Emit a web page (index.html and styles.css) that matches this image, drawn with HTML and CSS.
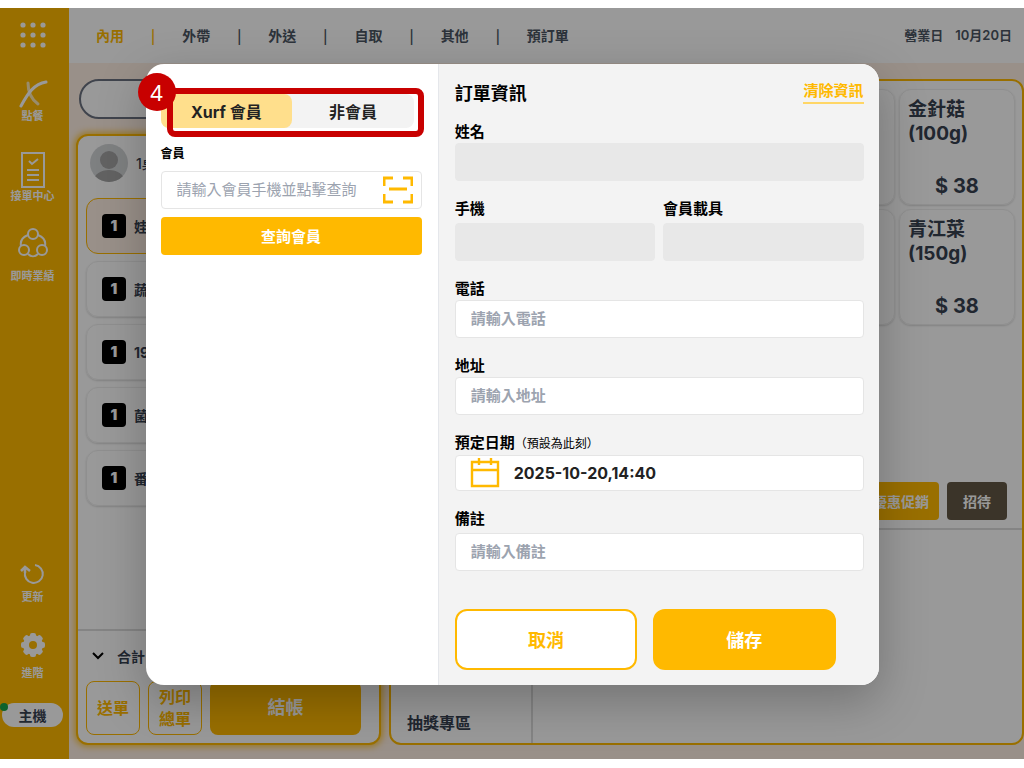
FILE: index.html
```html
<!DOCTYPE html>
<html lang="zh-Hant">
<head>
    <meta charset="UTF-8">
    <meta name="viewport" content="width=device-width, initial-scale=1.0">
    <title>訂單資訊</title>
    <link rel="stylesheet" href="styles.css">
</head>
<body>
    <div class="app">
        <nav class="sidebar">
            <a href="#" class="side-item side-menu" aria-label="menu">
                <svg width="26" height="26" viewBox="0 0 26 26" fill="currentColor">
                    <circle cx="3" cy="3" r="2.6"/><circle cx="13" cy="3" r="2.6"/><circle cx="23" cy="3" r="2.6"/>
                    <circle cx="3" cy="13" r="2.6"/><circle cx="13" cy="13" r="2.6"/><circle cx="23" cy="13" r="2.6"/>
                    <circle cx="3" cy="23" r="2.6"/><circle cx="13" cy="23" r="2.6"/><circle cx="23" cy="23" r="2.6"/>
                </svg>
            </a>
            <a href="#" class="side-item side-order">
                <svg width="30" height="28" viewBox="0 0 30 28" fill="none" stroke="currentColor" stroke-linecap="round">
                    <path d="M10 3C10 12 13 19 20 24" stroke-width="3" opacity=".7"/>
                    <path d="M3 26C10 13 16 4 28 2" stroke-width="3"/>
                </svg>
                <span>點餐</span>
            </a>
            <a href="#" class="side-item side-center">
                <svg width="24" height="36" viewBox="0 0 24 36" fill="none" stroke="currentColor" stroke-width="2">
                    <rect x="1" y="1" width="22" height="34"/>
                    <path d="M8 9l3 3 6-5M6 18h12M6 23h12M6 28h12"/>
                </svg>
                <span>接單中心</span>
            </a>
            <a href="#" class="side-item side-sales">
                <svg width="30" height="30" viewBox="0 0 30 30" fill="none" stroke="currentColor" stroke-width="2">
                    <circle cx="15" cy="6" r="5"/>
                    <circle cx="6" cy="22" r="5"/>
                    <circle cx="24" cy="22" r="5"/>
                    <path d="M10 7C5 9 2 13 3 18M20 7c5 2 8 6 7 11M10 26c3 3 7 3 10 0"/>
                </svg>
                <span>即時業績</span>
            </a>
            <div class="side-bottom">
                <a href="#" class="side-item side-refresh">
                    <svg width="28" height="22" viewBox="0 0 28 22" fill="none" stroke="currentColor" stroke-width="2">
                        <path d="M16 2a9 9 0 1 1-10 7"/>
                        <path d="M2 8l4-4 5 4M6 4v6" stroke-width="2.5"/>
                    </svg>
                    <span>更新</span>
                </a>
                <a href="#" class="side-item side-settings">
                    <svg width="24" height="24" viewBox="0 0 24 24">
                        <g fill="currentColor">
                            <rect x="9" y="0" width="6" height="24" rx="2"/>
                            <rect x="9" y="0" width="6" height="24" rx="2" transform="rotate(45 12 12)"/>
                            <rect x="9" y="0" width="6" height="24" rx="2" transform="rotate(90 12 12)"/>
                            <rect x="9" y="0" width="6" height="24" rx="2" transform="rotate(135 12 12)"/>
                            <circle cx="12" cy="12" r="10"/>
                        </g>
                        <circle cx="12" cy="12" r="4" fill="#ffb900"/>
                    </svg>
                    <span>進階</span>
                </a>
                <button type="button" class="host">主機</button>
            </div>
        </nav>

        <div class="main">
            <header class="topbar">
                <div class="order-types">
                    <a href="#" class="active">內用</a><span class="active">|</span>
                    <a href="#">外帶</a><span>|</span>
                    <a href="#">外送</a><span>|</span>
                    <a href="#">自取</a><span>|</span>
                    <a href="#">其他</a><span>|</span>
                    <a href="#">預訂單</a>
                </div>
                <div class="business-day"><span>營業日</span><span>10月20日</span></div>
            </header>

            <div class="content">
                <div class="order-column">
                    <input type="search" class="search" aria-label="search">
                    <section class="order-panel">
                        <div class="order-head">
                            <svg width="38" height="38" viewBox="0 0 38 38">
                                <defs><clipPath id="avatarClip"><circle cx="19" cy="19" r="19"/></clipPath></defs>
                                <circle cx="19" cy="19" r="19" fill="#d3d5d8"/>
                                <g clip-path="url(#avatarClip)" fill="#a3a3a3">
                                    <circle cx="19" cy="16" r="9"/>
                                    <ellipse cx="19" cy="36" rx="15" ry="10"/>
                                </g>
                            </svg>
                            <span>1桌</span>
                        </div>
                        <ul class="order-list">
                            <li class="selected"><b>1</b><span>娃</span></li>
                            <li><b>1</b><span>蔬</span></li>
                            <li><b>1</b><span>19</span></li>
                            <li><b>1</b><span>菌</span></li>
                            <li><b>1</b><span>番</span></li>
                        </ul>
                        <div class="order-foot">
                            <div class="total">
                                <svg width="12" height="8" viewBox="0 0 12 8" fill="none" stroke="#000" stroke-width="2"><path d="M1 1l5 5 5-5"/></svg>
                                <span>合計</span>
                            </div>
                            <div class="order-buttons">
                                <button type="button" class="outline">送單</button>
                                <button type="button" class="outline">列印總單</button>
                                <button type="button" class="checkout">結帳</button>
                            </div>
                        </div>
                    </section>
                </div>

                <section class="product-panel">
                    <div class="products">
                        <div class="product"></div>
                        <div class="product"></div>
                        <div class="product"></div>
                        <div class="product"></div>
                        <div class="product"><h3>金針菇<br>(100g)</h3><p>$ 38</p></div>
                        <div class="product"></div>
                        <div class="product"></div>
                        <div class="product"></div>
                        <div class="product"></div>
                        <div class="product"><h3>青江菜<br>(150g)</h3><p>$ 38</p></div>
                    </div>
                    <div class="actions">
                        <button type="button">優惠促銷</button>
                        <button type="button" class="dark">招待</button>
                    </div>
                    <div class="categories">
                        <div class="category"><a href="#">抽獎專區</a></div>
                    </div>
                </section>
            </div>
        </div>

        <div class="overlay">
            <div class="modal" role="dialog" aria-modal="true" aria-labelledby="modalTitle">
                <div class="member">
                    <div class="tabs">
                        <button type="button" class="tab active">Xurf 會員</button>
                        <button type="button" class="tab">非會員</button>
                        <div class="step-frame"></div>
                        <div class="step-number">4</div>
                    </div>
                    <label for="memberPhone">會員</label>
                    <div class="member-input">
                        <input type="text" id="memberPhone" placeholder="請輸入會員手機並點擊查詢">
                        <svg width="30" height="28" viewBox="0 0 30 28" fill="none" stroke="#ffb900" stroke-width="3">
                            <path d="M1 10V2h9M20 2h9v8M29 18v8h-9M10 26H1v-8M6 13h18"/>
                        </svg>
                    </div>
                    <button type="button" class="query">查詢會員</button>
                </div>

                <form class="info">
                    <div class="info-head">
                        <h2 id="modalTitle">訂單資訊</h2>
                        <a href="#">清除資訊</a>
                    </div>
                    <div class="field">
                        <label for="name">姓名</label>
                        <input type="text" id="name" disabled>
                    </div>
                    <div class="row">
                        <div class="field spaced">
                            <label for="mobile">手機</label>
                            <input type="text" id="mobile" disabled>
                        </div>
                        <div class="field spaced">
                            <label for="carrier">會員載具</label>
                            <input type="text" id="carrier" disabled>
                        </div>
                    </div>
                    <div class="field">
                        <label for="phone">電話</label>
                        <input type="text" id="phone" placeholder="請輸入電話">
                    </div>
                    <div class="field">
                        <label for="address">地址</label>
                        <input type="text" id="address" placeholder="請輸入地址">
                    </div>
                    <div class="field">
                        <label for="date">預定日期<small>（預設為此刻）</small></label>
                        <div class="date-box">
                            <svg width="30" height="30" viewBox="0 0 30 30" fill="none" stroke="#ffb900" stroke-width="2.4">
                                <path d="M2 4h26v24H2zM2 12h26M9 0v7M21 0v7"/>
                            </svg>
                            <input type="text" id="date" value="2025-10-20,14:40">
                        </div>
                    </div>
                    <div class="field spaced">
                        <label for="note">備註</label>
                        <input type="text" id="note" placeholder="請輸入備註">
                    </div>
                    <div class="buttons">
                        <button type="button" class="cancel">取消</button>
                        <button type="submit" class="save">儲存</button>
                    </div>
                </form>
            </div>
        </div>
    </div>
</body>
</html>
```
FILE: styles.css
```css
:root {
    --yellow: #ffb900;
    --text: #374151;
    --red: #c80000;
}

* {
    margin: 0;
    padding: 0;
    box-sizing: border-box;
}

body {
    font-family: Inter, "Noto Sans CJK TC", sans-serif;
    font-size: 15px;
    color: var(--text);
    background: #fff;
    padding: 8px 0;
}

button, input {
    font-family: inherit;
    font-size: 15px;
}

button {
    border: none;
    cursor: pointer;
    font-weight: 700;
}

a {
    color: inherit;
    text-decoration: none;
}

svg {
    display: block;
    flex-shrink: 0;
}

.app {
    position: relative;
    display: flex;
    min-height: calc(100vh - 17px);
}

/* Sidebar */
.sidebar {
    width: 69px;
    flex-shrink: 0;
    display: flex;
    flex-direction: column;
    background: var(--yellow);
    padding: 14px 0 32px;
    color: #fff;
}

.side-item {
    display: flex;
    flex-direction: column;
    align-items: center;
    font-size: 11px;
    font-weight: 700;
    line-height: 16px;
    padding-right: 4px;
}

.side-order {
    margin-top: 32px;
}

.side-center {
    margin-top: 28px;
}

.side-sales {
    margin-top: 24px;
}

.side-sales span {
    margin-top: 10px;
}

.side-bottom {
    margin-top: auto;
}

.side-refresh span {
    margin-top: 4px;
}

.side-settings {
    margin-top: 28px;
}

.side-settings span {
    margin-top: 8px;
}

.host {
    position: relative;
    display: block;
    width: 61px;
    height: 24px;
    margin: 22px 0 0 2px;
    border-radius: 12px;
    background: #fff;
    color: var(--text);
    font-size: 14px;
}

.host::before {
    content: "";
    position: absolute;
    left: -2px;
    top: 0;
    width: 8px;
    height: 8px;
    border-radius: 50%;
    background: #16a34a;
}

/* Top bar */
.main {
    flex: 1;
    min-width: 0;
    display: flex;
    flex-direction: column;
    background: #fff0e4;
}

.topbar {
    display: flex;
    justify-content: space-between;
    align-items: center;
    height: 55px;
    padding: 0 12px 2px 27px;
    background: #fff;
    color: #4b5563;
}

.order-types {
    display: flex;
    gap: 27px;
    font-family: "Noto Sans CJK TC", sans-serif;
    font-size: 14px;
    font-weight: 700;
}

.order-types .active {
    color: var(--yellow);
}

.business-day {
    display: flex;
    gap: 12px;
    font-size: 13px;
    font-weight: 600;
}

.content {
    flex: 1;
    display: flex;
    gap: 8px;
    padding: 16px 0 14px 7px;
}

/* Current order */
.order-column {
    width: 305px;
    flex-shrink: 0;
    display: flex;
    flex-direction: column;
}

.search {
    height: 40px;
    margin: 0 3px 15px;
    padding: 0 16px;
    border: 2px solid #6b7280;
    border-radius: 20px;
    background: #fff;
}

.order-panel {
    flex: 1;
    display: flex;
    flex-direction: column;
    border: 2px solid var(--yellow);
    border-radius: 12px;
    background: #fff;
    box-shadow: 0 0 6px 2px rgba(255, 185, 0, 0.7);
}

.order-head {
    display: flex;
    align-items: center;
    gap: 8px;
    padding: 8px 12px;
    font-size: 14px;
    font-weight: 500;
}

.order-list {
    flex: 1;
    list-style: none;
    padding: 8px 16px 8px 8px;
}

.order-list li {
    display: flex;
    align-items: center;
    gap: 8px;
    height: 56px;
    margin-bottom: 7px;
    padding: 0 15px;
    border: 1px solid #eee;
    border-radius: 12px;
    box-shadow: 0 1px 2px rgba(0, 0, 0, 0.15);
    font-size: 14px;
    font-weight: 700;
}

.order-list .selected {
    border-color: var(--yellow);
    background: #fff0e4;
    box-shadow: none;
}

.order-list b {
    width: 24px;
    height: 24px;
    border-radius: 4px;
    background: #000;
    color: #fff;
    font-size: 15px;
    text-align: center;
    line-height: 24px;
}

.order-foot {
    border-top: 2px solid #ddd;
    padding: 0 18px 8px 8px;
}

.total {
    display: flex;
    align-items: center;
    gap: 13px;
    height: 50px;
    padding-left: 6px;
    font-size: 14px;
    font-weight: 700;
}

.order-buttons {
    display: flex;
    gap: 8px;
}

.order-buttons button {
    height: 54px;
    border-radius: 8px;
    font-size: 16px;
    line-height: 22px;
}

.order-buttons .outline {
    width: 54px;
    padding: 0 8px;
    border: 1px solid var(--yellow);
    background: #fff;
    color: var(--yellow);
}

.order-buttons .checkout {
    flex: 1;
    background: var(--yellow);
    color: #fff;
    font-size: 18px;
}

/* Products */
.product-panel {
    flex: 1;
    min-width: 0;
    display: flex;
    flex-direction: column;
    border: 2px solid var(--yellow);
    border-radius: 12px;
    background: #fff;
}

.products {
    flex: 1;
    display: grid;
    grid-template-columns: repeat(5, 1fr);
    align-content: start;
    gap: 4px;
    padding: 8px 7px 8px 28px;
}

.product {
    display: flex;
    flex-direction: column;
    justify-content: space-between;
    height: 116px;
    padding: 8px 8px 6px;
    border: 1px solid #eee;
    border-radius: 12px;
    box-shadow: 0 1px 2px rgba(0, 0, 0, 0.15);
    font-size: 20px;
    font-weight: 700;
    line-height: 24px;
}

.product h3 {
    font-size: 19px;
}

.product p {
    text-align: center;
}

.actions {
    display: flex;
    justify-content: flex-end;
    gap: 8px;
    padding: 8px 15px;
    border-bottom: 2px solid #ddd;
}

.actions button {
    height: 38px;
    padding: 0 10px;
    border-radius: 4px;
    background: var(--yellow);
    color: #fff;
    font-size: 14px;
}

.actions .dark {
    padding: 0 16px;
    background: #635845;
}

.categories {
    display: flex;
    height: 213px;
}

.category {
    display: flex;
    align-items: flex-end;
    width: 142px;
    padding: 8px 16px;
    border-right: 2px solid #ddd;
    font-size: 16px;
    font-weight: 700;
    line-height: 24px;
}

/* Modal */
.overlay {
    position: absolute;
    inset: 0;
    display: flex;
    align-items: center;
    justify-content: center;
    padding-bottom: 19px;
    background: rgba(0, 0, 0, 0.4);
}

.modal {
    display: flex;
    width: 90%;
    max-width: 733px;
    border-radius: 18px;
    background: #fff;
    color: #000;
    box-shadow: 0 16px 48px rgba(0, 0, 0, 0.25);
}

.member {
    width: 40%;
    padding: 30px 16px 30px 15px;
    border-right: 1px solid #e5e7eb;
}

.tabs {
    position: relative;
    display: flex;
    margin-right: 8px;
    border-radius: 8px;
    background: #f3f3f3;
}

.tab {
    flex: 1;
    height: 34px;
    border-radius: 8px;
    background: none;
    color: #222;
    font-size: 16px;
}

.tab.active {
    flex: 0 0 52%;
    background: #ffdf8c;
}

.step-frame {
    position: absolute;
    inset: -6px -10px -9px 6px;
    border: 6px solid var(--red);
    border-radius: 8px;
}

.step-number {
    position: absolute;
    left: -23px;
    top: -21px;
    width: 38px;
    height: 38px;
    border-radius: 50%;
    background: var(--red);
    color: #fff;
    font-family: "Noto Sans", sans-serif;
    font-size: 22px;
    line-height: 38px;
    text-align: center;
}

.member label {
    display: block;
    margin: 16px 0 7px;
    font-size: 12px;
    font-weight: 700;
    line-height: 20px;
}

.member-input,
.date-box,
.field > input {
    width: 100%;
    height: 38px;
    border: 1px solid #e5e5e5;
    border-radius: 4px;
    background: #fff;
}

.member-input {
    display: flex;
    align-items: center;
    padding: 0 8px 0 15px;
}

.member-input input,
.date-box input {
    flex: 1;
    min-width: 0;
    border: none;
    outline: none;
    background: none;
}

input::placeholder {
    color: #9ca3af;
}

.query {
    width: 100%;
    height: 38px;
    margin-top: 8px;
    border-radius: 4px;
    background: var(--yellow);
    color: #fff;
}

.info {
    flex: 1;
    padding: 16px 15px 15px 16px;
    border-radius: 0 18px 18px 0;
    background: #f3f3f3;
}

.info-head {
    display: flex;
    justify-content: space-between;
    align-items: center;
    height: 24px;
    margin-bottom: 18px;
}

.info-head h2 {
    font-size: 18px;
}

.info-head a {
    border-bottom: 2px solid #ffd666;
    color: var(--yellow);
    font-weight: 700;
    line-height: 22px;
}

.row {
    display: flex;
    gap: 8px;
}

.field {
    flex: 1;
    margin-bottom: 18px;
}

.field label {
    display: block;
    margin-bottom: 1px;
    font-weight: 700;
    line-height: 20px;
}

.field.spaced label {
    margin-bottom: 4px;
}

.field small {
    font-size: 12px;
    font-weight: 400;
}

.field > input {
    display: block;
    padding: 0 15px;
}

.field > input::placeholder {
    font-weight: 700;
}

.field > input:disabled {
    border-color: #e8e8e8;
    background: #e8e8e8;
}

.date-box {
    display: flex;
    align-items: center;
    gap: 14px;
    height: 36px;
    padding: 0 14px;
}

.date-box input {
    color: #222;
    font-size: 16px;
    font-weight: 700;
}

.buttons {
    display: flex;
    gap: 16px;
    margin-top: 38px;
    padding-right: 28px;
}

.buttons button {
    flex: 1;
    height: 61px;
    border: 2px solid var(--yellow);
    border-radius: 12px;
    font-size: 18px;
}

.cancel {
    background: #fff;
    color: var(--yellow);
}

.save {
    background: var(--yellow);
    color: #fff;
}
```
